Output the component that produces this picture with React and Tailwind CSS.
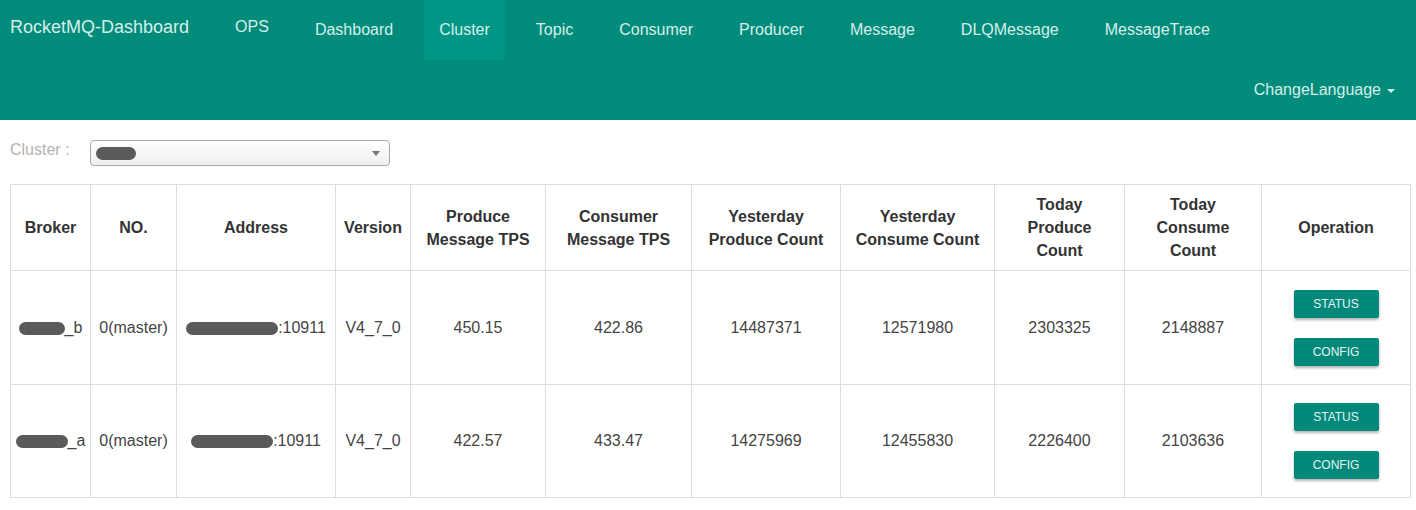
import React from 'react';

const navItems = ['Dashboard', 'Cluster', 'Topic', 'Consumer', 'Producer', 'Message', 'DLQMessage', 'MessageTrace'];

const columns = [
  { label: ['Broker'], w: 'w-[80px]' },
  { label: ['NO.'], w: 'w-[86px]' },
  { label: ['Address'], w: 'w-[159px]' },
  { label: ['Version'], w: 'w-[75px]' },
  { label: ['Produce', 'Message TPS'], w: 'w-[135px]' },
  { label: ['Consumer', 'Message TPS'], w: 'w-[146px]' },
  { label: ['Yesterday', 'Produce Count'], w: 'w-[149px]' },
  { label: ['Yesterday', 'Consume Count'], w: 'w-[154px]' },
  { label: ['Today', 'Produce', 'Count'], w: 'w-[130px]' },
  { label: ['Today', 'Consume', 'Count'], w: 'w-[137px]' },
  { label: ['Operation'], w: 'w-[149px]' },
];

const rows = [
  { suffix: '_b', blob: 'w-[46px]', addrBlob: 'w-[92px]', stats: ['450.15', '422.86', '14487371', '12571980', '2303325', '2148887'] },
  { suffix: '_a', blob: 'w-[52px]', addrBlob: 'w-[82px]', stats: ['422.57', '433.47', '14275969', '12455830', '2226400', '2103636'] },
];

// redaction scribble from the screenshot
const Blob = ({ className }) => (
  <span className={`inline-block h-[13px] rounded-full bg-[#5a5a5a] align-middle ${className}`} />
);

const OpButton = ({ children }) => (
  <button className="w-[85px] h-[28px] rounded-[2px] bg-[#00897b] text-[12px] text-[#e6f5f2] shadow-[0_2px_3px_rgba(0,0,0,0.3)]">
    {children}
  </button>
);

export default function App() {
  return (
    <div className="w-[1416px] min-h-[510px] bg-white font-['Liberation_Sans',Arial,sans-serif] text-[#333]">
      {/* NAVBAR */}
      <header className="bg-[#008b7a] text-[#d6efeb] h-[120px] flex flex-col">
        <div className="flex h-[60px]">
          <div className="pl-[10px] pr-[46px] pt-[16px] text-[18px] leading-[22px]">RocketMQ-Dashboard</div>
          <div className="pt-[17px] text-[16px] leading-[20px]">OPS</div>
          <nav className="flex gap-[16px] ml-[31px]">
            {navItems.map((item) => (
              <a
                key={item}
                className={`px-[15px] pt-[20px] text-[16px] leading-[20px] ${item === 'Cluster' ? 'bg-[#009686]' : ''}`}
              >
                {item}
              </a>
            ))}
          </nav>
        </div>
        <div className="flex justify-end h-[60px] pr-[21px]">
          <a className="pt-[20px] text-[16px] leading-[20px] flex items-start gap-[6px]">
            ChangeLanguage
            <span className="mt-[9px] border-x-[4px] border-x-transparent border-t-[4px] border-t-[#d6efeb]" />
          </a>
        </div>
      </header>

      {/* FILTER */}
      <div className="flex items-start px-[10px] pt-[20px] pb-[18px]">
        <label className="w-[80px] text-[16px] leading-[20px] text-[#b3b3b3]">Cluster :</label>
        <div className="relative w-[300px] h-[26px] rounded-[4px] border border-[#aaa] bg-gradient-to-b from-white to-[#eee] flex items-center px-[5px]">
          <Blob className="w-[40px]" />
          <span className="absolute right-[9px] top-[10px] border-x-[4px] border-x-transparent border-t-[5px] border-t-[#777]" />
        </div>
      </div>

      {/* TABLE */}
      <div className="px-[10px]">
        <table className="table-fixed border-collapse w-[1400px] text-[16px]">
          <thead>
            <tr className="h-[86px]">
              {columns.map((c) => (
                <th key={c.label.join()} className={`${c.w} border border-[#ddd] text-center font-bold leading-[23px] text-[#333] px-[4px]`}>
                  {c.label.map((l) => (
                    <div key={l}>{l}</div>
                  ))}
                </th>
              ))}
            </tr>
          </thead>
          <tbody>
            {rows.map((r, i) => (
              <tr key={i} className={i === 0 ? 'h-[114px]' : 'h-[113px]'}>
                <td className="border border-[#ddd] text-center whitespace-nowrap text-[#444]">
                  <Blob className={r.blob} />
                  {r.suffix}
                </td>
                <td className="border border-[#ddd] text-center text-[#444]">0(master)</td>
                <td className="border border-[#ddd] text-center whitespace-nowrap text-[#444]">
                  <Blob className={r.addrBlob} />
                  :10911
                </td>
                <td className="border border-[#ddd] text-center text-[#444]">V4_7_0</td>
                {r.stats.map((s, j) => (
                  <td key={j} className="border border-[#ddd] text-center text-[#444]">{s}</td>
                ))}
                <td className="border border-[#ddd]">
                  <div className="flex flex-col items-center gap-[20px]">
                    <OpButton>STATUS</OpButton>
                    <OpButton>CONFIG</OpButton>
                  </div>
                </td>
              </tr>
            ))}
          </tbody>
        </table>
      </div>
    </div>
  );
}
